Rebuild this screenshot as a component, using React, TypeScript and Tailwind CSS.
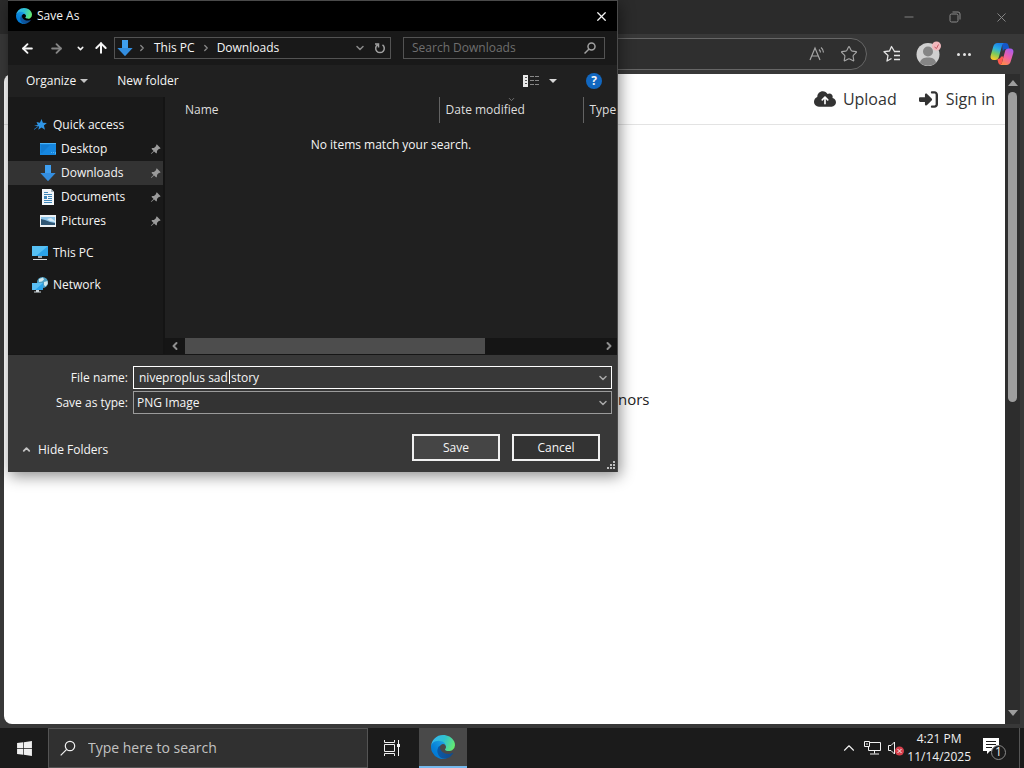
import { useId } from "react";
import type { ReactNode } from "react";
import { ArrowLeft, ArrowRight, ArrowUp, ChevronDown, ChevronLeft, ChevronRight, ChevronUp, Minus, Star, X } from "lucide-react";
import { BsPinAngleFill } from "react-icons/bs";
import { FaCloudArrowUp, FaRightToBracket } from "react-icons/fa6";
import { FaWindows } from "react-icons/fa";

function EdgeLogo({ className }: { className: string }) {
  const id = useId();

  return (
    <svg viewBox="0 0 256 256" className={className} aria-hidden="true">
      <defs>
        <linearGradient id={`${id}a`} x1="0.1" y1="0.5" x2="1" y2="0.5">
          <stop stopColor="#0c59a4" />
          <stop offset="1" stopColor="#114a8b" />
        </linearGradient>
        <linearGradient id={`${id}b`} x1="0.8" y1="0.2" x2="0.2" y2="0.9">
          <stop stopColor="#1b9de2" />
          <stop offset="0.6" stopColor="#0680d7" />
          <stop offset="1" stopColor="#0078d4" />
        </linearGradient>
        <linearGradient id={`${id}c`} x1="0" y1="0.3" x2="1" y2="0.6">
          <stop stopColor="#35b5f1" />
          <stop offset="0.5" stopColor="#2fc2cf" />
          <stop offset="1" stopColor="#66eb6e" />
        </linearGradient>
      </defs>
      <path fill={`url(#${id}a)`} d="M231 190.5c-3.4 1.8-6.9 3.4-10.5 4.7a101.5 101.5 0 0 1-35.9 6.5c-47.3 0-88.5-32.5-88.5-74.3a31.5 31.5 0 0 1 16.4-27.3c-42.8 1.8-53.8 46.4-53.8 72.5 0 74 68.1 81.4 82.8 81.4 7.9 0 19.8-2.3 27-4.6l1.3-.4a128.3 128.3 0 0 0 66.6-52.8 4 4 0 0 0-5.4-5.7z" />
      <path fill={`url(#${id}b)`} d="M105.7 241.4a79.2 79.2 0 0 1-22.7-21.3 80.7 80.7 0 0 1 29.5-120c3.2-1.5 8.5-4.1 15.6-4a32.4 32.4 0 0 1 25.7 13 31.9 31.9 0 0 1 6.3 18.7c0-.2 24.5-79.6-80-79.6-43.9 0-80 41.6-80 78.2a130.2 130.2 0 0 0 12.1 56 128 128 0 0 0 156.4 67 75.5 75.5 0 0 1-62.8-8z" />
      <path fill={`url(#${id}c)`} d="M152.3 148.9c-.9 1-3.4 2.5-3.4 5.6 0 2.6 1.7 5.2 4.8 7.3 14.3 10 41.4 8.6 41.5 8.6a59.6 59.6 0 0 0 30.3-8.3 61.4 61.4 0 0 0 30.4-52.9c.3-22.4-8-37.3-11.3-43.9C223.5 23.9 177.7 0 128 0A128 128 0 0 0 0 126.2c.5-36.5 36.8-66 80-66 3.5 0 23.5.3 42 10 16.3 8.6 24.9 19 30.8 29.2 6.2 10.7 7.3 24.1 7.3 29.5 0 5.3-2.7 13.3-7.8 19.9z" />
    </svg>
  );
}

function CopilotLogo() {
  return (
    <svg viewBox="0 0 24 24" className="size-6" aria-hidden="true">
      <defs>
        <linearGradient id="cp-left" x1="0.6" y1="0" x2="0.3" y2="1">
          <stop stopColor="#1b7fe8" />
          <stop offset="0.35" stopColor="#2bb0e0" />
          <stop offset="0.65" stopColor="#7ccb5b" />
          <stop offset="1" stopColor="#ffc928" />
        </linearGradient>
        <linearGradient id="cp-right" x1="0.8" y1="0" x2="0.3" y2="1">
          <stop stopColor="#a65cf0" />
          <stop offset="0.5" stopColor="#ee5fa8" />
          <stop offset="1" stopColor="#ff8a4a" />
        </linearGradient>
      </defs>
      <path fill="#1557c8" d="M12 1h3.6c1.5 0 2.4.8 2.8 2.2l1 3.8h-3.2c-1.8 0-2.9.8-3.4 2.5z" />
      <path fill="url(#cp-left)" d="M7.5 1H14c-1.2.6-1.7 1.600-2.100 3L9 14.500C8.400 16.800 7.500 18 5.200 18H4c-2.800 0-4-2-3.300-4.600L3.300 4.500C4 2.200 5.200 1 7.500 1z" />
      <path fill="url(#cp-right)" d="M16.500 23H10c1.200-.6 1.700-1.600 2.100-3L15 9.500C15.600 7.200 16.500 6.500 18.800 6.500H20c2.800 0 4 1.800 3.300 4.400l-2.600 8.600c-.7 2.300-1.900 3.500-4.200 3.500z" />
      <path fill="#ff5a4f" d="M12 23c-2 0-3.200-.6-3.700-2.300L7.300 17c2 0 3.100-.7 3.700-2.500h2.500l-1.400 5.500c-.3 1.300-.8 2.300-2.100 3z" />
    </svg>
  );
}

function DownloadIcon({ className }: { className: string }) {
  return (
    <svg viewBox="0 0 16 16" className={className} aria-hidden="true">
      <path fill="#3f9ff0" d="M5 0h6v8h4.500L8 16 .5 8H5z" />
      <path fill="#2c83d6" d="M.5 8h15L8 16z" opacity="0.6" />
    </svg>
  );
}

function QuickAccessIcon() {
  return (
    <svg viewBox="0 0 16 16" className="size-4" aria-hidden="true">
      <path fill="#2f95e6" d="M9.500 2l1.400 3.700 4 .3-3 2.500 1.100 4.300-3.500-2.200-3.200 2.100.8-3.200L2 8.800l3.800-.9L4.500 5l3.400.7z" />
      <path stroke="#1f6fb5" strokeWidth="1" d="M2 12.500l4-3" />
    </svg>
  );
}

function DesktopIcon() {
  return (
    <svg viewBox="0 0 16 16" className="size-4" aria-hidden="true">
      <path fill="#1687e0" d="M0 2h16v12H0z" />
      <path fill="#4ab2f7" d="M0 2h16v1H0zM11 11h1v1h-1zM13 11h1v1h-1zM15 11h1v2h-1z" />
      <path fill="#0d6cbd" d="M1 4h9l-8 8H1z" opacity="0.4" />
    </svg>
  );
}

function DocumentIcon() {
  return (
    <svg viewBox="0 0 16 16" className="size-4" aria-hidden="true">
      <path fill="#f1f5f8" d="M2 0h9l3 3v13H2z" />
      <path fill="#a7b5c0" d="M11 0l3 3h-3z" />
      <path fill="#3f86b8" d="M4 3h4v1H4zM4 5h8v1H4zM4 7h3v3H4zM8 7h4v1H8zM8 9h4v1H8zM4 11h8v1H4zM4 13h8v1H4z" />
    </svg>
  );
}

function PictureIcon() {
  return (
    <svg viewBox="0 0 16 16" className="size-4" aria-hidden="true">
      <path fill="#eef2f5" d="M0 2h16v12H0z" />
      <path fill="#8ec5ea" d="M1 4h14v8H1z" />
      <path fill="#2f5674" d="M1 6l4 1 5 2 5 1v2H1z" />
      <path fill="#d6ecf8" d="M7 6l4-1 4 3v1l-5-1z" />
    </svg>
  );
}

function ComputerIcon() {
  return (
    <svg viewBox="0 0 16 16" className="size-4" aria-hidden="true">
      <path fill="#2ba3ea" d="M0 1h16v10H0z" />
      <path fill="#6accf8" d="M0 1h16L4 11H0z" opacity="0.7" />
      <path fill="#9aa5ad" d="M6 11h4v2H6z" />
      <path fill="#d5dbe0" d="M1 14h14v1H1z" />
    </svg>
  );
}

function NetworkIcon() {
  return (
    <svg viewBox="0 0 16 16" className="size-4" aria-hidden="true">
      <circle cx="10.5" cy="5.5" r="5.5" fill="#4d9fc4" />
      <path fill="#d3e9ee" d="M7 2l4-1.500 1 2-2 2-3 .5zM12 5l3.500-1 .3 3-2.300 2.500L12 8z" />
      <path fill="#2ba3ea" d="M0 6h11v7H0z" />
      <path fill="#7ad2fa" d="M0 6h11l-8 7H0z" opacity="0.6" />
      <path fill="#cfd7dc" d="M4 13h3v1.500h2v1H2v-1h2z" />
    </svg>
  );
}

function MagnifierIcon({ className, strokeWidth = 1.5 }: { className: string; strokeWidth?: number }) {
  return (
    <svg viewBox="0 0 16 16" fill="none" stroke="currentColor" strokeWidth={strokeWidth} className={className} aria-hidden="true">
      <circle cx="10" cy="6" r="4.7" />
      <path d="M6.700 9.300L.7 15.300" />
    </svg>
  );
}

const windowButton = "flex w-[46px] items-center justify-center text-[#8c8c8c]";

function BrowserChrome() {
  return (
    <header>
      <div className="flex h-[34px] justify-end bg-[#2b2b2b]">
        <button className={windowButton} aria-label="Minimize"><Minus size={14} strokeWidth={1.5} /></button>
        <button className={windowButton} aria-label="Restore">
          <svg viewBox="0 0 12 12" className="size-3" fill="none" stroke="currentColor" aria-hidden="true">
            <rect x="1" y="3" width="8" height="8" rx="1.5" />
            <path d="M3.500 1h5.500a2 2 0 0 1 2 2v5.500" />
          </svg>
        </button>
        <button className={windowButton} aria-label="Close"><X size={15} strokeWidth={1.5} /></button>
      </div>
      <div className="flex h-10 items-center bg-[#383838] pr-2.5">
        <div className="ml-10 flex h-8 flex-1 items-center justify-end gap-3.5 rounded-full border border-[#666] bg-[#2f2f2f] pr-2 text-[#a6a6a6]">
          <button aria-label="Read aloud" className="flex">
            <svg viewBox="0 0 18 18" className="size-[18px]" fill="none" stroke="currentColor" strokeWidth="1.2" aria-hidden="true">
              <path d="M2 15L7 3l5 12M3.700 11h6.600M11 4.500a4 4 0 0 1 1.500 3M13 2.500a6.500 6.500 0 0 1 2.500 5" />
            </svg>
          </button>
          <button aria-label="Add to favorites"><Star size={18} strokeWidth={1.5} /></button>
        </div>
        <div className="ml-4 flex items-center gap-[15px] text-[#e4e4e4]">
          <button aria-label="Favorites">
            <svg viewBox="0 0 18 18" className="size-[18px]" fill="none" stroke="currentColor" strokeWidth="1.3" strokeLinejoin="round" aria-hidden="true">
              <path d="M11.500 6.500L8.500 1.500l-2 4.500-5.500.7 4 3.800-1 5.500 4.500-2.500M11 6.500h6M11 10.500h6M11 14.500h6" />
            </svg>
          </button>
          <button aria-label="Profile">
            <svg viewBox="0 0 26 26" className="size-[26px]" aria-hidden="true">
              <circle cx="12" cy="13.5" r="11.5" fill="#d0d0d0" />
              <circle cx="12" cy="10.5" r="5" fill="#858585" />
              <path fill="#858585" d="M4 21.500c1-4 4-5 8-5s7 1 8 5a11.500 11.500 0 0 1-16 0z" />
              <circle cx="20.5" cy="5" r="4.500" fill="#f2b8bd" />
              <path d="M18.500 6l2 1.500 2-4" fill="none" stroke="#c75b66" />
            </svg>
          </button>
          <button aria-label="Settings and more" className="flex w-3.5 justify-between">
            <span className="size-[3px] rounded-full bg-current" />
            <span className="size-[3px] rounded-full bg-current" />
            <span className="size-[3px] rounded-full bg-current" />
          </button>
          <button aria-label="Copilot" className="ml-1"><CopilotLogo /></button>
        </div>
      </div>
    </header>
  );
}

function WebPage() {
  return (
    <div className="flex min-h-0 flex-1 bg-[#383838] pb-1 pl-1 pr-1">
      <main className="min-w-0 flex-1 rounded-l-lg bg-white">
        <nav className="flex h-[51px] items-center justify-end gap-[22px] border-b border-[#e3e3e3] pr-2.5 font-['Open_Sans',sans-serif] text-base text-[#333]">
          <a href="#upload" className="flex items-center gap-[7px]"><FaCloudArrowUp size={22} /> Upload</a>
          <a href="#signin" className="flex items-center gap-2"><FaRightToBracket size={19} /> Sign in</a>
        </nav>
        <p className="pl-[614px] pt-[262px] font-['Open_Sans',sans-serif] text-[15px] leading-6 text-[#222]">nors</p>
      </main>
      <div className="flex w-[15px] flex-col items-center bg-[#2d2d2d] pb-2 pt-1.5" aria-hidden="true">
        <span className="border-x-[5px] border-b-[6px] border-x-transparent border-b-[#9d9d9d]" />
        <span className="mt-1.5 h-[310px] w-[9px] shrink-0 rounded-full bg-[#9d9d9d]" />
        <span className="mt-auto border-x-[5px] border-t-[6px] border-x-transparent border-t-[#9d9d9d]" />
      </div>
    </div>
  );
}

function TreeItem({ icon, label, pinned, active }: { icon: ReactNode; label: string; pinned?: boolean; active?: boolean }) {
  return (
    <li>
      <button className={`flex h-6 w-full items-center gap-[5px] pr-0.5 text-left ${pinned ? "pl-8" : "pl-6"} ${active ? "bg-[#333]" : ""}`}>
        {icon}
        <span className="flex-1">{label}</span>
        {pinned && <BsPinAngleFill size={11} className="text-[#9b9b9b]" />}
      </button>
    </li>
  );
}

function NavBar() {
  return (
    <div className="flex h-[34px] items-center bg-[#191919] pl-3 pr-3">
      <button aria-label="Back"><ArrowLeft size={15} strokeWidth={3} /></button>
      <button aria-label="Forward" className="ml-3.5 text-[#858585]"><ArrowRight size={15} strokeWidth={3} /></button>
      <button aria-label="Recent locations" className="ml-3"><ChevronDown size={9} strokeWidth={4} /></button>
      <button aria-label="Up" className="ml-2"><ArrowUp size={16} strokeWidth={3} /></button>
      <div className="ml-[5px] flex h-[22px] flex-1 items-center border border-[#535353] pl-0.5 pr-1">
        <DownloadIcon className="size-4" />
        <ChevronRight size={10} strokeWidth={3} className="ml-1 text-[#8a8a8a]" />
        <button className="ml-[7px]">This PC</button>
        <ChevronRight size={10} strokeWidth={3} className="ml-1.5 text-[#8a8a8a]" />
        <button className="ml-1.5">Downloads</button>
        <button aria-label="Previous locations" className="ml-auto text-[#8a8a8a]"><ChevronDown size={12} strokeWidth={3} /></button>
        <button aria-label="Refresh" className="ml-2 text-[#a0a0a0]">
          <svg viewBox="0 0 12 12" className="size-3" fill="none" stroke="currentColor" strokeWidth="1.5" aria-hidden="true">
            <path d="M8.500 2.800a4.300 4.300 0 1 1-5 0M1 2h3.500v3.500" />
          </svg>
        </button>
      </div>
      <label className="ml-3 flex h-[22px] w-[202px] items-center border border-[#535353] px-2">
        <input type="search" aria-label="Search Downloads" placeholder="Search Downloads" className="min-w-0 flex-1 bg-transparent outline-none placeholder:text-[#6f6f6f]" />
        <MagnifierIcon className="size-3 text-[#a0a0a0]" strokeWidth={2} />
      </label>
    </div>
  );
}

function CommandBar() {
  return (
    <div className="flex h-8 items-center bg-[#202020] pl-[18px] pr-[15px]">
      <button className="flex items-center gap-1">
        Organize
        <span className="border-x-4 border-t-4 border-x-transparent border-t-[#c4c4c4]" />
      </button>
      <button className="ml-[29px]">New folder</button>
      <button aria-label="Change your view" className="ml-auto flex items-center gap-2.5">
        <svg viewBox="0 0 16 12" className="h-3 w-4" aria-hidden="true">
          <path fill="#e8e8e8" d="M0 0h5v12H0z" />
          <path fill="#555" d="M2 2h2v1H2zM2 5h2v1H2zM2 8h2v1H2z" />
          <path fill="#888" d="M7 1h4v1H7zM12 1h4v1h-4zM7 5h4v1H7zM12 5h4v1h-4zM7 9h4v1H7zM12 9h4v1h-4z" />
        </svg>
        <span className="border-x-4 border-t-4 border-x-transparent border-t-[#d8d8d8]" />
      </button>
      <button aria-label="Help" className="ml-[29px] size-4 rounded-full bg-[#1167c0] text-xs font-bold leading-4">?</button>
    </div>
  );
}

function FileList() {
  return (
    <section className="flex min-w-0 flex-1 flex-col bg-[#202020]">
      <table className="w-full table-fixed">
        <thead>
          <tr className="h-[26px] text-left text-[#dedede]">
            <th className="border-r border-[#636363] pl-5 font-normal">Name</th>
            <th className="relative w-36 border-r border-[#636363] pl-1.5 font-normal">
              Date modified
              <ChevronDown size={9} className="absolute -top-0.5 left-[67px] text-[#8a8a8a]" />
            </th>
            <th className="w-[34px] overflow-hidden pl-1.5 font-normal">Type</th>
          </tr>
        </thead>
        <tbody>
          <tr>
            <td colSpan={3} className="pt-3.5 text-center leading-4">No items match your search.</td>
          </tr>
        </tbody>
      </table>
      <div className="mt-auto flex h-4 items-stretch bg-[#151515] text-[#8f8f8f]">
        <button aria-label="Scroll left" className="flex w-5 items-center justify-center"><ChevronLeft size={12} strokeWidth={4} /></button>
        <div className="flex-1">
          <div className="h-full w-[72%] bg-[#4d4d4d]" />
        </div>
        <button aria-label="Scroll right" className="flex w-4 items-center justify-center"><ChevronRight size={12} strokeWidth={4} /></button>
      </div>
    </section>
  );
}

function SaveAsDialog() {
  return (
    <div
      role="dialog"
      aria-label="Save As"
      className="absolute left-2 top-0 w-[610px] border-r border-t border-[#4a4a4a] bg-[#383838] font-['Open_Sans',sans-serif] text-xs text-[#f5f5f5] shadow-[2px_4px_14px_rgba(0,0,0,0.45)]"
    >
      <div className="flex h-[30px] items-center bg-black pl-2">
        <EdgeLogo className="size-4" />
        <h1 className="ml-[5px] flex-1">Save As</h1>
        <button aria-label="Close" className="mr-2"><X size={15} strokeWidth={2} /></button>
      </div>
      <NavBar />
      <CommandBar />
      <div className="flex h-[258px] border-b border-[#161616]">
        <aside className="w-[157px] border-r-2 border-[#141414] bg-[#191919] pt-4">
          <ul className="flex flex-col">
            <TreeItem icon={<QuickAccessIcon />} label="Quick access" />
            <TreeItem icon={<DesktopIcon />} label="Desktop" pinned />
            <TreeItem icon={<DownloadIcon className="size-4" />} label="Downloads" pinned active />
            <TreeItem icon={<DocumentIcon />} label="Documents" pinned />
            <TreeItem icon={<PictureIcon />} label="Pictures" pinned />
          </ul>
          <ul className="mt-2 flex flex-col gap-2">
            <TreeItem icon={<ComputerIcon />} label="This PC" />
            <TreeItem icon={<NetworkIcon />} label="Network" />
          </ul>
        </aside>
        <FileList />
      </div>
      <form className="px-[5px] pb-[11px] pt-[11px]" onSubmit={(e) => e.preventDefault()}>
        <div className="grid grid-cols-[115px_1fr] items-center gap-x-[5px] gap-y-0.5">
          <label htmlFor="file-name" className="text-right">File name:</label>
          <div className="relative flex h-[23px] items-center border border-white pl-[5px] pr-0.5">
            <input id="file-name" defaultValue="niveproplus sad story" className="min-w-0 flex-1 bg-transparent outline-none" />
            {/* text caret */}
            <span className="absolute left-[95px] top-[3px] h-3.5 w-px bg-white" />
            <button type="button" aria-label="Recent names" className="text-[#a8a8a8]"><ChevronDown size={12} strokeWidth={3} /></button>
          </div>
          <label htmlFor="file-type" className="text-right">Save as type:</label>
          <div className="relative flex">
            <select id="file-type" className="h-[23px] w-full appearance-none border border-[#9b9b9b] bg-[#333] pl-[3px] outline-none">
              <option>PNG Image</option>
            </select>
            <ChevronDown size={12} strokeWidth={3} className="pointer-events-none absolute right-[3px] top-1.5 text-[#a8a8a8]" />
          </div>
        </div>
        <div className="mt-5 flex items-center pl-2 pr-3">
          <button type="button" className="mt-1 flex items-center gap-1.5">
            <ChevronUp size={11} strokeWidth={4} className="text-[#c4c4c4]" /> Hide Folders
          </button>
          <button type="submit" className="ml-auto h-[27px] w-[88px] border-2 border-[#f0f0f0] bg-[#454545]">Save</button>
          <button type="button" className="ml-3 h-[27px] w-[88px] border-2 border-[#f0f0f0] bg-[#333]">Cancel</button>
        </div>
      </form>
      <svg viewBox="0 0 9 9" className="absolute bottom-0.5 right-0.5 size-[9px] text-[#bdbdbd]" aria-hidden="true">
        <path fill="currentColor" d="M7 0h2v2H7zM7 3h2v2H7zM7 6h2v2H7zM4 3h2v2H4zM4 6h2v2H4zM1 6h2v2H1z" />
      </svg>
    </div>
  );
}

function Taskbar() {
  return (
    <footer className="flex h-10 bg-[#1b1b1b] font-['Open_Sans',sans-serif] text-[#f0f0f0]">
      <button aria-label="Start" className="flex w-12 items-center justify-center"><FaWindows size={17} /></button>
      <label className="flex w-80 items-center gap-3 border border-[#545454] bg-[#303030] pl-[11px]">
        <MagnifierIcon className="size-4" strokeWidth={1.2} />
        <input type="text" aria-label="Search" placeholder="Type here to search" className="min-w-0 flex-1 bg-transparent text-sm outline-none placeholder:text-[#c2c2c2]" />
      </label>
      <button aria-label="Task View" className="flex w-[51px] items-center justify-center">
        <svg viewBox="0 0 16 16" className="mr-1 size-4" fill="none" stroke="currentColor" aria-hidden="true">
          <path d="M.5 0v2.500h10V0M.5 16v-2.500h10V16M.5 4.500h10v7H.5zM14.500 0v16" />
          <path d="M13 4h3v3h-3z" fill="currentColor" stroke="none" />
        </svg>
      </button>
      <button aria-label="Microsoft Edge" className="flex w-12 items-center justify-center border-b-2 border-[#76b9ed] bg-[#494949]">
        <EdgeLogo className="size-6" />
      </button>
      <div className="ml-auto flex items-center">
        <button aria-label="Show hidden icons"><ChevronUp size={18} strokeWidth={1.5} /></button>
        <svg viewBox="0 0 17 14" className="ml-1.5 h-3.5 w-[17px]" fill="none" stroke="currentColor" aria-hidden="true">
          <path d="M6 1.500h10.500v8H4.500V6M.5.500h5v5h-5zM2 3h2M10.500 9.500v3M6 13h9" />
        </svg>
        <svg viewBox="0 0 18 16" className="ml-1.5 h-4 w-[18px]" fill="none" stroke="currentColor" aria-hidden="true">
          <path d="M7.500 2L4 5.500H1.500v5H4L7.500 14z" />
          <circle cx="12.5" cy="11" r="4.5" fill="#d8404c" stroke="none" />
          <path d="M10.500 9l4 4M14.500 9l-4 4" />
        </svg>
        <time className="ml-0.5 text-center text-xs leading-[18px]">
          <span className="block">4:21 PM</span>
          <span className="block">11/14/2025</span>
        </time>
        <button aria-label="1 new notification" className="relative ml-3 mr-3 size-6">
          <svg viewBox="0 0 24 24" className="size-6" aria-hidden="true">
            <path fill="#fff" d="M0 2h16v13h-9l-3 3v-3H0z" />
            <path stroke="#1b1b1b" d="M3 5.500h10M3 8.500h10M3 11.500h6" />
            <circle cx="15.5" cy="16.5" r="7" fill="#1b1b1b" stroke="#8a8a8a" />
          </svg>
          <span className="absolute bottom-0 right-1 w-[9px] text-center text-xs leading-4">1</span>
        </button>
        <button aria-label="Show desktop" className="h-10 w-[5px] border-l border-[#555]" />
      </div>
    </footer>
  );
}

export default function App() {
  return (
    <div className="relative flex h-screen flex-col overflow-hidden bg-[#383838]">
      <BrowserChrome />
      <WebPage />
      <Taskbar />
      <SaveAsDialog />
    </div>
  );
}
